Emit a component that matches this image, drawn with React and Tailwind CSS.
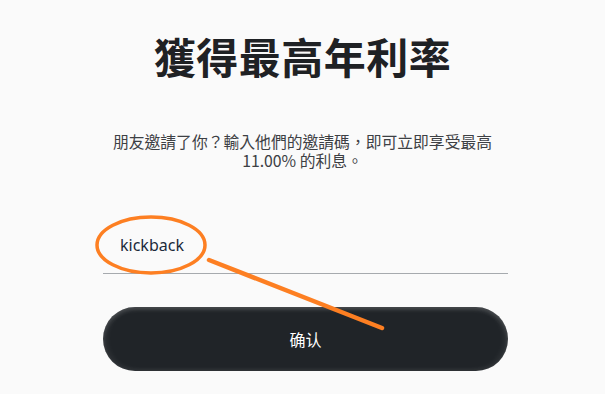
export default function App() {
  return (
    <div className="relative min-h-[394px] w-full bg-[#fafafa] overflow-hidden font-['Noto_Sans','Noto_Sans_CJK_TC',sans-serif]">
      <div className="flex flex-col items-center pt-[26px]">
        <h1 className="text-[42px] leading-[60px] font-bold text-[#1f2124] tracking-[0.5px] font-['Noto_Sans_CJK_TC',sans-serif]">獲得最高年利率</h1>
        <p className="mt-[46px] w-[400px] text-center text-[15.8px] leading-[19px] text-[#3d4044] font-['Noto_Sans_CJK_TC',sans-serif]">
          朋友邀請了你？輸入他們的邀請碼，即可立即享受最高<br />11.00% 的利息。
        </p>
        <div className="mt-[63px] w-[405px] ml-[6px] border-b border-[#a6aaae] pl-[17px] pb-[16px]">
          <span className="text-[16px] leading-[22px] text-[#1c2a3a] font-['Noto_Sans',sans-serif]">kickback</span>
        </div>
        <button className="mt-[33px] ml-[6px] w-[405px] h-[64px] rounded-full bg-[#202428] text-white text-[16px] font-['Noto_Sans_CJK_SC',sans-serif] shadow-[inset_0_3px_4px_rgba(255,255,255,0.12),inset_3px_0_6px_rgba(255,255,255,0.08),inset_-3px_0_6px_rgba(255,255,255,0.08)]">
          确认
        </button>
      </div>
      <svg className="absolute left-0 top-0 pointer-events-none" width="605" height="394">
        <ellipse cx="151" cy="245" rx="54" ry="28" fill="none" stroke="#fd7f22" strokeWidth="3.5" />
        <line x1="209" y1="260" x2="382" y2="328" stroke="#fd7f22" strokeWidth="4.5" strokeLinecap="round" />
      </svg>
    </div>
  );
}
